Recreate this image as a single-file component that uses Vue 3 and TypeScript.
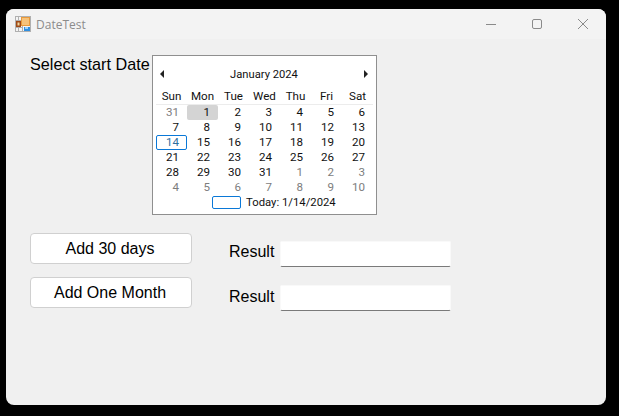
<script setup lang="ts">
interface Day {
  n: number;
  muted?: boolean;
  hover?: boolean;
  focus?: boolean;
}

const dayNames = ['Sun', 'Mon', 'Tue', 'Wed', 'Thu', 'Fri', 'Sat'];

const days: Day[] = [
  { n: 31, muted: true },
  { n: 1, hover: true },
  ...[2, 3, 4, 5, 6, 7, 8, 9, 10, 11, 12, 13].map((n) => ({ n })),
  { n: 14, focus: true },
  ...Array.from({ length: 17 }, (_, i) => ({ n: i + 15 })),
  ...Array.from({ length: 10 }, (_, i) => ({ n: i + 1, muted: true })),
];

const actions = ['Add 30 days', 'Add One Month'];
</script>

<template>
  <div class="window">
    <div class="titlebar">
      <svg class="app-icon" width="16" height="16" viewBox="0 0 16 16">
        <rect x="0.5" y="0.5" width="15" height="15" fill="#f4f4f4" stroke="#b0b0b0" />
        <path d="M0 4.5 H6 M0 11.5 H7 M3.5 0 V5 M3.5 11 V16 M7.5 9 V16" stroke="#b0b0b0" fill="none" />
        <rect x="6" y="1" width="9" height="9" fill="#e89a3c" />
        <rect x="7" y="2" width="7" height="7" fill="#f6c27a" />
        <rect x="1" y="5" width="5" height="6" fill="#a04a18" />
        <rect x="2.5" y="6.5" width="2" height="3" fill="#f0d8a0" />
        <rect x="9" y="11" width="6" height="4" fill="#2f8fe0" />
        <rect x="10" y="11" width="3" height="2" fill="#9fd0f8" />
      </svg>
      <span class="title">DateTest</span>
      <div class="controls">
        <svg width="12" height="12" viewBox="0 0 12 12"><line x1="1" y1="6.5" x2="11" y2="6.5" stroke="#8a8a8a" /></svg>
        <svg width="12" height="12" viewBox="0 0 12 12"><rect x="1.5" y="1.5" width="9" height="9" rx="1.5" fill="none" stroke="#8a8a8a" /></svg>
        <svg width="12" height="12" viewBox="0 0 12 12"><path d="M1 1 L11 11 M11 1 L1 11" stroke="#8a8a8a" fill="none" /></svg>
      </div>
    </div>

    <div class="content">
      <div class="top-row">
        <label class="field-label">Select start Date</label>
        <div class="calendar">
          <div class="cal-head">
            <span class="arrow left"></span>
            <span>January 2024</span>
            <span class="arrow right"></span>
          </div>
          <div class="cal-grid names">
            <span v-for="d in dayNames" :key="d" class="name">{{ d }}</span>
          </div>
          <div class="cal-grid">
            <span
              v-for="(d, i) in days"
              :key="i"
              :class="['day', { muted: d.muted, hover: d.hover, focus: d.focus }]"
            >{{ d.n }}</span>
          </div>
          <div class="cal-foot">
            <span class="today-box"></span>
            <span>Today: 1/14/2024</span>
          </div>
        </div>
      </div>

      <div class="actions">
        <div v-for="a in actions" :key="a" class="action-row">
          <button class="btn">{{ a }}</button>
          <label class="result-label">Result</label>
          <input class="result" type="text" />
        </div>
      </div>
    </div>
  </div>
</template>

<style scoped>
.window {
  width: 600px;
  height: 396px;
  margin: 9px 0 0 6px;
  background: #f0f0f0;
  border-radius: 8px;
  overflow: hidden;
  display: flex;
  flex-direction: column;
  font-family: "Liberation Sans", Arial, sans-serif;
  color: #000;
}
.titlebar {
  height: 30px;
  flex: none;
  background: #f3f3f3;
  display: flex;
  align-items: center;
  padding-left: 9px;
}
.app-icon {
  margin-top: -1px;
}
.title {
  margin-left: 5px;
  font: 12px "Open Sans", sans-serif;
  color: #8c8c8c;
}
.controls {
  margin-left: auto;
  display: flex;
  gap: 34px;
  padding-right: 17px;
}
.controls svg {
  display: block;
}
.content {
  padding: 16px 0 0 24px;
}
.top-row {
  display: flex;
  align-items: flex-start;
}
.field-label {
  font-size: 16.2px;
  line-height: 18px;
  width: 122px;
  white-space: nowrap;
}
.calendar {
  width: 225px;
  height: 160px;
  box-sizing: border-box;
  background: #fff;
  border: 1px solid #8f8f8f;
  font: 11.6px/15px Roboto, sans-serif;
  color: #111;
  padding: 0 3px;
}
.cal-head {
  height: 33px;
  padding: 3px 4px 0 4px;
  box-sizing: border-box;
  display: flex;
  align-items: center;
  justify-content: space-between;
  font-size: 11.2px;
}
.arrow {
  width: 0;
  height: 0;
  border-top: 4px solid transparent;
  border-bottom: 4px solid transparent;
}
.arrow.left {
  border-right: 4px solid #222;
}
.arrow.right {
  border-left: 4px solid #222;
  margin-right: 1px;
}
.cal-grid {
  display: grid;
  grid-template-columns: repeat(7, 31px);
}
.names {
  height: 15px;
  border-bottom: 1px solid #ececec;
  text-align: center;
}
.day {
  height: 15px;
  padding-right: 8px;
  text-align: right;
  box-sizing: border-box;
  border-radius: 2px;
}
.day.muted {
  color: #7d7d7d;
}
.day.hover {
  background: #d4d4d4;
}
.day.focus {
  color: #2f6f9f;
  border: 1px solid #0a78d7;
  padding-right: 7px;
  line-height: 13px;
}
.cal-foot {
  display: flex;
  align-items: center;
  height: 15px;
  padding-left: 56px;
  gap: 5px;
  font-size: 11.3px;
}
.today-box {
  width: 29px;
  height: 13px;
  box-sizing: border-box;
  border: 1px solid #0a78d7;
  border-radius: 2px;
}
.actions {
  margin-top: 18px;
  display: flex;
  flex-direction: column;
  gap: 13px;
}
.action-row {
  display: flex;
  align-items: flex-start;
  height: 31px;
}
.btn {
  width: 162px;
  height: 31px;
  background: #fff;
  border: 1px solid #d0d0d0;
  border-radius: 4px;
  font: 16px "Liberation Sans", Arial, sans-serif;
  color: #000;
  padding: 0 2px 0 0;
}
.result-label {
  margin: 10px 0 0 37px;
  width: 51px;
  font-size: 16px;
  line-height: 18px;
}
.result {
  width: 171px;
  height: 26px;
  margin-top: 8px;
  box-sizing: border-box;
  background: #fff;
  border: 1px solid #f9f9f9;
  border-bottom: 1px solid #7a7a7a;
  border-radius: 2px;
  outline: none;
  padding: 0;
}
.action-row + .action-row .result-label {
  margin-top: 11px;
}
</style>

<style>
html,
body {
  background: #000;
}
</style>
